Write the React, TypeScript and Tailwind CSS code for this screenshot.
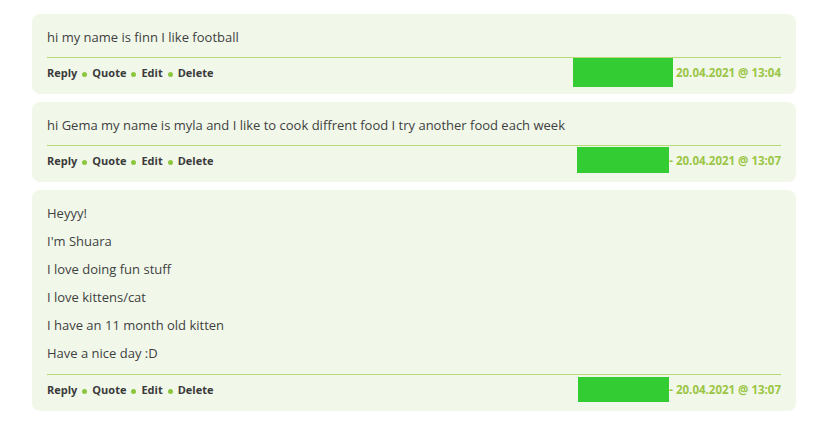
import React from "react";

type Post = {
	lines: string[];
	date: string;
	dash: boolean;
	box: { w: string; h: string; mt: string };
};

const posts: Post[] = [
	{
		lines: ["hi my name is finn I like football"],
		date: "20.04.2021 @ 13:04",
		dash: false,
		box: { w: "w-[100px]", h: "h-[29px]", mt: "mt-0" },
	},
	{
		lines: [
			"hi Gema my name is myla and I like to cook diffrent food I try another food each week",
		],
		date: "20.04.2021 @ 13:07",
		dash: true,
		box: { w: "w-[92px]", h: "h-[26px]", mt: "mt-[1px]" },
	},
	{
		lines: [
			"Heyyy!",
			"I'm Shuara",
			"I love doing fun stuff",
			"I love kittens/cat",
			"I have an 11 month old kitten",
			"Have a nice day :D",
		],
		date: "20.04.2021 @ 13:07",
		dash: true,
		box: { w: "w-[91px]", h: "h-[25px]", mt: "mt-[2px]" },
	},
];

function Dot() {
	return <span className="mx-[5px] inline-block h-[5px] w-[5px] rounded-full bg-[#8cc63e] align-middle" />;
}

function PostCard({ post }: { post: Post }) {
	const multi = post.lines.length > 1;
	return (
		<div className="rounded-[8px] bg-[#f1f8ea] px-[15px] pt-[14px]">
			<div className="flex flex-col gap-[10px] text-[13px] leading-[18px] text-[#3f3f3f]">
				{post.lines.map((l, i) => (
					<p key={i}>{l}</p>
				))}
			</div>
			<div
				className={`${multi ? "mt-[12px]" : "mt-[11px]"} flex justify-between border-t border-[#b8da79]`}
			>
				<div className="pt-[8px] pb-[14px] text-[11px] leading-[14px] font-bold text-[#3a3a3a]">
					Reply
					<Dot />
					Quote
					<Dot />
					Edit
					<Dot />
					Delete
				</div>
				<div className="flex items-start">
					<span className={`${post.box.w} ${post.box.h} ${post.box.mt} bg-[#33cc33]`} />
					<span className="pt-[8px] text-[11.5px] leading-[14px] font-bold text-[#9bc545]">
						{post.dash ? "- " : "\u00a0"}
						{post.date}
					</span>
				</div>
			</div>
		</div>
	);
}

export default function App() {
	return (
		<div
			className="min-h-screen bg-white px-[32px] pt-[14px] pr-[22px]"
			style={{ fontFamily: '"Open Sans", "Liberation Sans", sans-serif' }}
		>
			<div className="flex flex-col gap-[8px]">
				{posts.map((p, i) => (
					<PostCard key={i} post={p} />
				))}
			</div>
		</div>
	);
}
